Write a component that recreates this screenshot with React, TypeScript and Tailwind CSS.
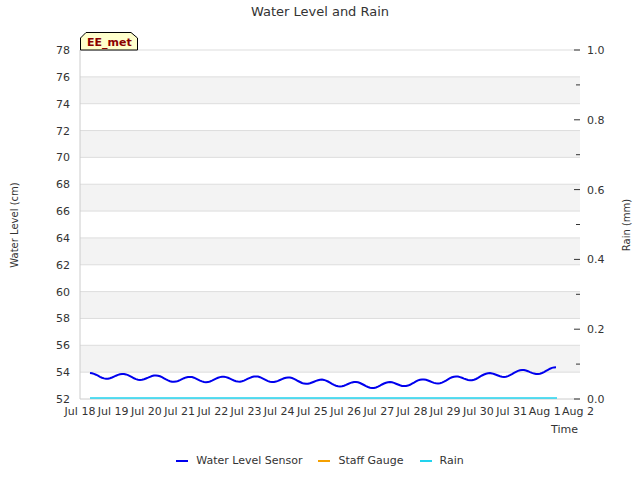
const L = 80, R = 580, T = 50, B = 399;
const yv = (v: number) => B - ((v - 52) / 26) * (B - T);
const days = ["Jul 18","Jul 19","Jul 20","Jul 21","Jul 22","Jul 23","Jul 24","Jul 25","Jul 26","Jul 27","Jul 28","Jul 29","Jul 30","Jul 31","Aug 1","Aug 2"];
const dx = (R - L - 2) / 15;

function series() {
  const pts: string[] = [];
  const base = [53.75,53.7,53.6,53.45,53.45,53.5,53.45,53.3,53.1,53.0,53.2,53.4,53.65,53.9,54.1];
  for (let x = 90; x <= 557; x += 2) {
    const d = (x - 80) / dx;
    const i = Math.min(13, Math.floor(d));
    const f = d - i;
    const m = base[i] * (1 - f) + base[i + 1] * f;
    const v = m + 0.2 * Math.sin((d - 0.05) * Math.PI * 2);
    pts.push(`${x},${yv(v).toFixed(1)}`);
  }
  return pts.join(" ");
}

export default function App() {
  const bands = Array.from({ length: 13 }, (_, i) => i);
  return (
    <div className="w-[640px] h-[480px] bg-white flex flex-col" style={{ fontFamily: "'DejaVu Sans', sans-serif" }}>
      <div className="h-[24px] flex items-center justify-center text-[13px] text-[#333]">Water Level and Rain</div>
      <svg width="640" height="416" className="text-[11px]" fill="#333">
        <g transform="translate(0,-24)">
          {bands.map(i => {
            const v = 52 + i * 2;
            return <rect key={i} x={L} y={yv(v + 2)} width={R - L} height={yv(v) - yv(v + 2)} fill={i % 2 === 1 ? "#f3f3f3" : "#fff"} />;
          })}
          {bands.map(i => <line key={i} x1={L} x2={R} y1={yv(54 + i * 2)} y2={yv(54 + i * 2)} stroke="#ddd" />)}
          <line x1={L} x2={L} y1={T} y2={B} stroke="#ccc" />
          <line x1={L} x2={R} y1={B} y2={B} stroke="#ccc" />
          {Array.from({ length: 14 }, (_, i) => (
            <text key={i} x={L - 10} y={yv(52 + i * 2) + 4} textAnchor="end" fontSize="11">{52 + i * 2}</text>
          ))}
          {days.map((d, i) => (
            <text key={d} x={L + i * dx} y={415} textAnchor="middle" fontSize="11">{d}</text>
          ))}
          {Array.from({ length: 11 }, (_, i) => {
            const y = B - i * (B - T) / 10;
            return <g key={i}>
              <line x1={i % 2 === 0 ? 574 : 576} x2={580} y1={y} y2={y} stroke="#333" />
              {i % 2 === 0 && <text x={587} y={y + 4} fontSize="11">{(i / 10).toFixed(1)}</text>}
            </g>;
          })}
          <line x1={90} x2={557} y1={B - 1} y2={B - 1} stroke="#22d3ee" strokeWidth="1.5" />
          <polyline points={series()} fill="none" stroke="#0000ee" strokeWidth="2" />
          <text x={578} y={433} textAnchor="end" fontSize="11">Time</text>
          <text transform="translate(18,225) rotate(-90)" textAnchor="middle" fontSize="10">Water Level (cm)</text>
          <text transform="translate(630,225) rotate(-90)" textAnchor="middle" fontSize="10">Rain (mm)</text>
          <path d="M80.5,50 L80.5,38 L86,32.5 L131,32.5 L137.5,38 L137.5,50 Z" fill="#ffffcc" stroke="#000" />
          <text x={87} y={46} fontSize="11" fontWeight="bold" fill="#8b0000">EE_met</text>
        </g>
      </svg>
      <div className="flex-1 flex items-start justify-center gap-[16px] pt-[13px] text-[11px] text-[#333]">
        <div className="flex items-center gap-[8px]"><span className="w-[12px] h-[2px] bg-[#0000ee]" />Water Level Sensor</div>
        <div className="flex items-center gap-[8px]"><span className="w-[12px] h-[2px] bg-[#f5a000]" />Staff Gauge</div>
        <div className="flex items-center gap-[8px]"><span className="w-[12px] h-[2px] bg-[#22d3ee]" />Rain</div>
      </div>
    </div>
  );
}
